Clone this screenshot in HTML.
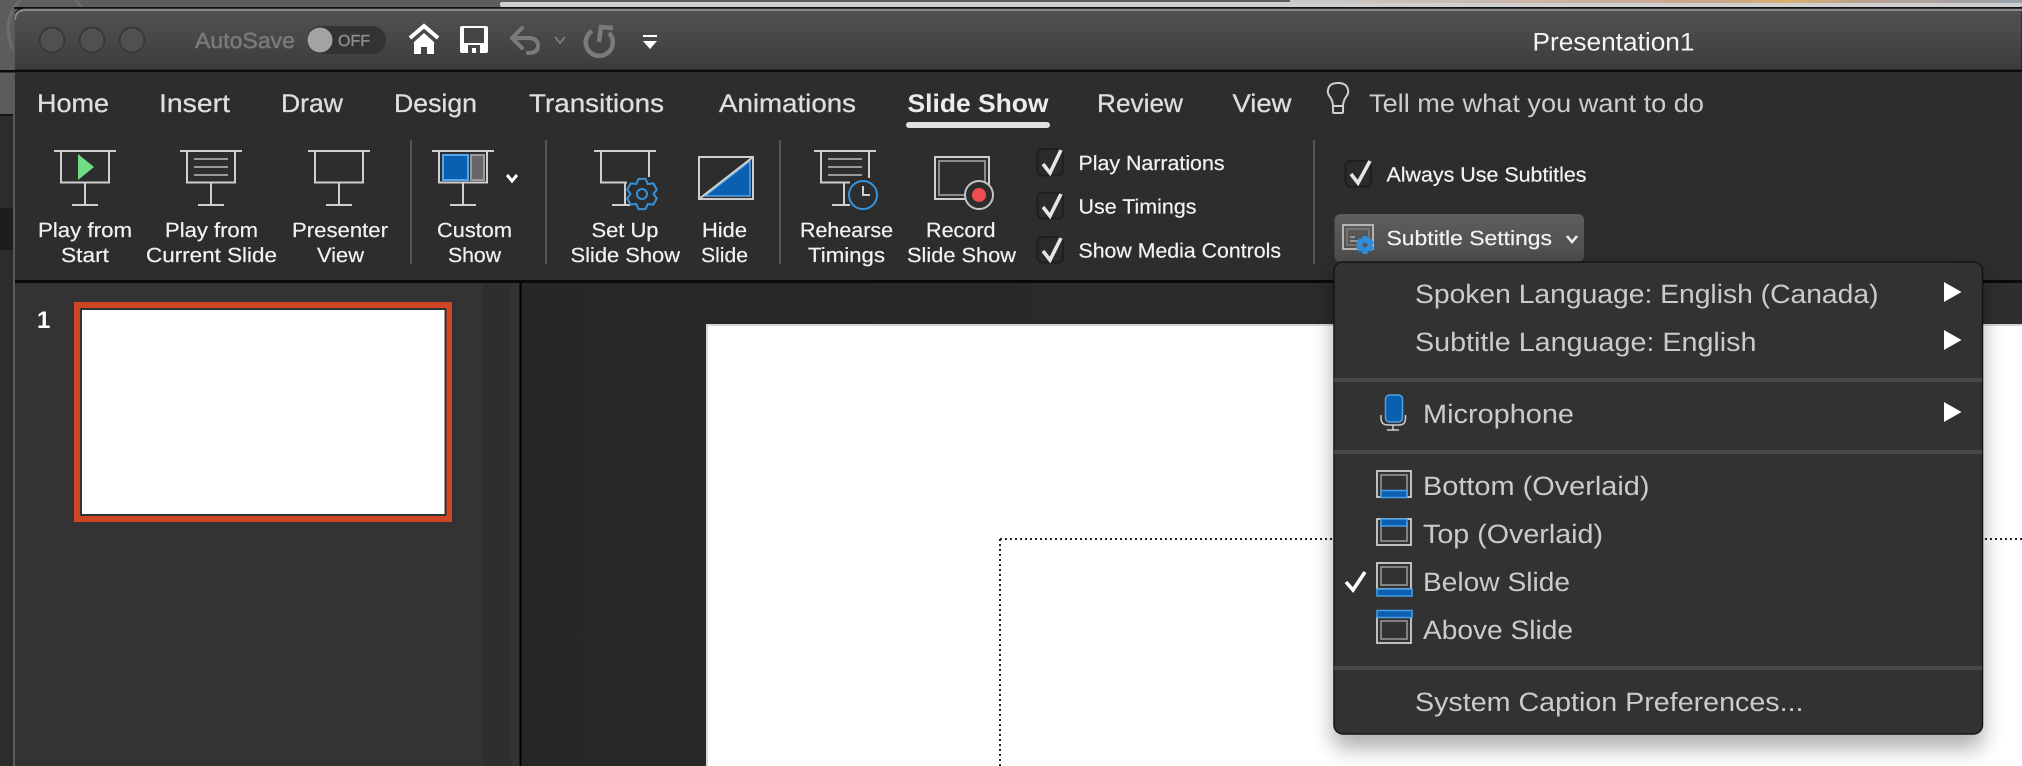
<!DOCTYPE html>
<html lang="en">
<head>
<meta charset="utf-8">
<title>Presentation1</title>
<style>
html,body{margin:0;padding:0;width:2022px;height:766px;overflow:hidden;background:#2a2c2c}
svg{display:block;font-family:"Liberation Sans",sans-serif;text-rendering:geometricPrecision}
.tab{font-size:25.5px;fill:#dedede;stroke:#dedede;stroke-width:.3}
.rb{font-size:20.5px;fill:#f2f2f2;stroke:#f2f2f2;stroke-width:.2}
.mn{font-size:26.5px;fill:#cbcbcb}
.ic{fill:none;stroke:#cfcfcf;stroke-width:2}
.ln{stroke:#999;stroke-width:2}
.cb{fill:#2b2b2b;stroke:#1f1f1f;stroke-width:2}
.ck{fill:none;stroke:#e6e6e6;stroke-width:3.6}
.sep{fill:#565656}
.ms{fill:#474747}
.bar{fill:#0a5fb0;stroke:#4a9fe3;stroke-width:1.5}
.ol{fill:none;stroke:#cfcfcf;stroke-width:1.8}
.il{fill:none;stroke:#8a8a8a;stroke-width:1.8}
</style>
</head>
<body>
<svg width="2022" height="766" viewBox="0 0 2022 766" xmlns="http://www.w3.org/2000/svg">
<defs>
<linearGradient id="tb" x1="0" y1="0" x2="0" y2="1"><stop offset="0" stop-color="#525252"/><stop offset="1" stop-color="#3c3c3c"/></linearGradient>
<linearGradient id="sb" x1="0" y1="0" x2="0" y2="1"><stop offset="0" stop-color="#5e5e5e"/><stop offset="1" stop-color="#4c4c4c"/></linearGradient>
<linearGradient id="wp" x1="0" y1="0" x2="1" y2="0"><stop offset="0" stop-color="#c9c9c9"/><stop offset=".58" stop-color="#c9a58c"/><stop offset=".68" stop-color="#d8b070"/><stop offset=".78" stop-color="#b8a090"/><stop offset="1" stop-color="#9aa4ac"/></linearGradient>
<linearGradient id="mainbg" x1="0" y1="0" x2="1" y2="0"><stop offset="0" stop-color="#272727"/><stop offset="1" stop-color="#2e2e2e"/></linearGradient>
<filter id="shadow" x="-10%" y="-10%" width="120%" height="125%"><feGaussianBlur stdDeviation="11"/></filter>
<polygon id="gear" points="-3.5,-15.1 3.5,-15.1 5.75,-9.96 11.3,-10.6 14.8,-4.5 11.5,0 14.8,4.5 11.3,10.6 5.75,9.96 3.5,15.1 -3.5,15.1 -5.75,9.96 -11.3,10.6 -14.8,4.5 -11.5,0 -14.8,-4.5 -11.3,-10.6 -5.75,-9.96" stroke-linejoin="round"/>
</defs>

<!-- behind the window -->
<rect x="0" y="0" width="2022" height="9" fill="#5c5c5c"/>
<rect x="0" y="0" width="14" height="114" fill="#5c5c5c"/>
<circle cx="48" cy="29" r="40" fill="#5e5e5e" stroke="#6c6c6c" stroke-width="3"/>
<rect x="0" y="114" width="14" height="2" fill="#161616"/>
<rect x="0" y="116" width="14" height="650" fill="#2b2d2d"/>
<rect x="0" y="208" width="14" height="42" fill="#1d1d1d"/>
<rect x="500" y="2" width="1522" height="5" rx="2" fill="#cfcfcf"/>
<rect x="1290" y="0" width="732" height="3" fill="url(#wp)"/>
<rect x="14" y="7" width="2008" height="2" fill="#111"/>

<!-- title bar -->
<path d="M14 70V20Q14 8 26 8H2022V70Z" fill="url(#tb)" stroke="#111" stroke-width="1"/>
<path d="M15 20Q15 10 26 10H2022" fill="none" stroke="#8a8a8a" stroke-width="2"/>
<rect x="13" y="9" width="2" height="757" fill="#5a5a5a"/>
<circle cx="52" cy="40" r="12.5" fill="#515151" stroke="#383838" stroke-width="2"/>
<circle cx="92" cy="40" r="12.5" fill="#515151" stroke="#383838" stroke-width="2"/>
<circle cx="132" cy="40" r="12.5" fill="#515151" stroke="#383838" stroke-width="2"/>
<text x="195" y="48" font-size="22" fill="#7a7a7a" stroke="#7a7a7a" stroke-width=".5" textLength="100" lengthAdjust="spacingAndGlyphs">AutoSave</text>
<rect x="307" y="26" width="79" height="28" rx="14" fill="#333"/>
<circle cx="320" cy="40" r="12.5" fill="#a3a3a3"/>
<text x="338" y="46" font-size="16" fill="#8e8e8e" stroke="#8e8e8e" stroke-width=".4" textLength="32" lengthAdjust="spacingAndGlyphs">OFF</text>

<!-- home -->
<path d="M410 38L424 26L438 38" fill="none" stroke="#fff" stroke-width="4"/>
<path d="M414 42L424 33L434 42V54H427V47H421V54H414Z" fill="#fff"/>
<!-- save -->
<path d="M462 26H486Q488 26 488 28V51Q488 53 486 53H462Q460 53 460 51V28Q460 26 462 26Z" fill="#fff"/>
<rect x="464" y="28" width="20" height="15" fill="#454545"/>
<rect x="468" y="45" width="12" height="8" fill="#454545"/>
<rect x="472" y="48" width="4" height="5" fill="#fff"/>
<!-- undo -->
<path d="M522 28L512 38L522 48M513 38H528Q538 38 538 46Q538 53 528 53" fill="none" stroke="#7b7b7b" stroke-width="4" stroke-linecap="round" stroke-linejoin="round"/>
<path d="M555 37L560 43L565 37" fill="none" stroke="#7b7b7b" stroke-width="2"/>
<!-- redo -->
<path d="M592 31A13.5 13.5 0 1 0 609 33" fill="none" stroke="#7b7b7b" stroke-width="4.5"/>
<path d="M613 28L601 27L599 42" fill="none" stroke="#7b7b7b" stroke-width="4.5"/>
<!-- customize -->
<rect x="643" y="35" width="14" height="2" fill="#fff"/>
<polygon points="643,41 657,41 650,49" fill="#fff"/>

<text x="1532.5" y="50.5" font-size="25.5" fill="#f4f4f4" textLength="162" lengthAdjust="spacingAndGlyphs">Presentation1</text>

<!-- ribbon -->
<rect x="0" y="70" width="2022" height="2.5" fill="#0c0c0c"/>
<rect x="15" y="72" width="2007" height="208" fill="#2d2d2d"/>
<rect x="15" y="280" width="2007" height="3" fill="#0a0a0a"/>

<text class="tab" x="37" y="112" textLength="72" lengthAdjust="spacingAndGlyphs">Home</text>
<text class="tab" x="159" y="112" textLength="71" lengthAdjust="spacingAndGlyphs">Insert</text>
<text class="tab" x="281" y="112" textLength="62" lengthAdjust="spacingAndGlyphs">Draw</text>
<text class="tab" x="394" y="112" textLength="83" lengthAdjust="spacingAndGlyphs">Design</text>
<text class="tab" x="529" y="112" textLength="135" lengthAdjust="spacingAndGlyphs">Transitions</text>
<text class="tab" x="719" y="112" textLength="137" lengthAdjust="spacingAndGlyphs">Animations</text>
<text class="tab" x="907.5" y="112" textLength="141" lengthAdjust="spacingAndGlyphs" font-weight="bold" style="fill:#ececec;stroke:none">Slide Show</text>
<rect x="906" y="122" width="144" height="6" rx="3" fill="#e2e2e2"/>
<text class="tab" x="1097" y="112" textLength="86" lengthAdjust="spacingAndGlyphs">Review</text>
<text class="tab" x="1232.5" y="112" textLength="59" lengthAdjust="spacingAndGlyphs">View</text>
<path d="M1333 107Q1333 101 1330 97Q1327 93 1328 90Q1329 83 1338 83Q1347 83 1348 90Q1349 93 1346 97Q1343 101 1343 107V112Q1343 113 1342 113H1334Q1333 113 1333 112Z M1333 106H1343" fill="none" stroke="#cfcfcf" stroke-width="2"/>
<text class="tab" x="1369" y="112" textLength="335" lengthAdjust="spacingAndGlyphs" style="fill:#cdcdcd;stroke:none">Tell me what you want to do</text>

<!-- play from start -->
<g class="ic"><path d="M54 151H116M61 151V182.5H109V151M85 182.5V205M72 205H98"/></g>
<polygon points="78,154 94,167 78,180" fill="#70dc84"/>
<text class="rb" x="38" y="237" textLength="94" lengthAdjust="spacingAndGlyphs">Play from</text>
<text class="rb" x="61" y="262" textLength="48" lengthAdjust="spacingAndGlyphs">Start</text>

<!-- play from current slide -->
<g class="ic"><path d="M180 151H242M187 151V182.5H235V151M211 182.5V205M198 205H224"/></g>
<path class="ln" d="M194 159H228M194 167H228M194 175H228"/>
<text class="rb" x="165" y="237" textLength="93" lengthAdjust="spacingAndGlyphs">Play from</text>
<text class="rb" x="146" y="262" textLength="131" lengthAdjust="spacingAndGlyphs">Current Slide</text>

<!-- presenter view -->
<g class="ic"><path d="M308 151H370M315 151V182.5H363V151M339 182.5V205M326 205H352"/></g>
<text class="rb" x="292" y="237" textLength="96" lengthAdjust="spacingAndGlyphs">Presenter</text>
<text class="rb" x="317" y="262" textLength="47" lengthAdjust="spacingAndGlyphs">View</text>

<rect class="sep" x="410" y="140" width="2" height="124"/>

<!-- custom show -->
<g class="ic"><path d="M432 151H494M439 151V182.5H487V151M463 182.5V205M450 205H476"/></g>
<rect x="443" y="155" width="25" height="25" fill="#0a5fb0" stroke="#56a7e8" stroke-width="2"/>
<rect x="471" y="155" width="13" height="25" fill="#666" stroke="#9a9a9a" stroke-width="2"/>
<path d="M507 175L512 181L517 175" fill="none" stroke="#fff" stroke-width="3"/>
<text class="rb" x="437" y="237" textLength="75" lengthAdjust="spacingAndGlyphs">Custom</text>
<text class="rb" x="448" y="262" textLength="53" lengthAdjust="spacingAndGlyphs">Show</text>

<rect class="sep" x="545" y="140" width="2" height="124"/>

<!-- set up slide show -->
<g class="ic"><path d="M594 151H656M601 151V182.5H627M649 151V177M625 182.5V205M612 205H630"/></g>
<use href="#gear" transform="translate(642 194)" fill="#2d2d2d" stroke="#3593dc" stroke-width="2"/>
<circle cx="642" cy="194" r="5" fill="none" stroke="#3593dc" stroke-width="2"/>
<text class="rb" x="591.5" y="237" textLength="67" lengthAdjust="spacingAndGlyphs">Set Up</text>
<text class="rb" x="570.5" y="262" textLength="109.5" lengthAdjust="spacingAndGlyphs">Slide Show</text>

<!-- hide slide -->
<rect x="699" y="157" width="54" height="42" fill="none" stroke="#cfcfcf" stroke-width="2"/>
<polygon points="750,161 750,196 705,196" fill="#0a5fb0" stroke="#56a7e8" stroke-width="1.5"/>
<path d="M699 199L753 157" stroke="#cfcfcf" stroke-width="2"/>
<text class="rb" x="702" y="237" textLength="45" lengthAdjust="spacingAndGlyphs">Hide</text>
<text class="rb" x="701" y="262" textLength="47" lengthAdjust="spacingAndGlyphs">Slide</text>

<rect class="sep" x="779" y="140" width="2" height="124"/>

<!-- rehearse -->
<g class="ic"><path d="M814 151H876M821 151V182.5H850M869 151V178M844 182.5V205M832 205H850"/></g>
<path class="ln" d="M828 159H862M828 167H862M828 175H862"/>
<circle cx="863" cy="195" r="14" fill="#2d2d2d" stroke="#3593dc" stroke-width="2"/>
<path d="M863 186V195H870" fill="none" stroke="#cfcfcf" stroke-width="2"/>
<text class="rb" x="800" y="237" textLength="93" lengthAdjust="spacingAndGlyphs">Rehearse</text>
<text class="rb" x="808" y="262" textLength="77" lengthAdjust="spacingAndGlyphs">Timings</text>

<!-- record -->
<rect x="935" y="157" width="54" height="42" fill="none" stroke="#cfcfcf" stroke-width="2"/>
<rect x="939" y="161" width="46" height="34" fill="none" stroke="#8c8c8c" stroke-width="2"/>
<circle cx="979" cy="195" r="14" fill="#2d2d2d" stroke="#c4c4c4" stroke-width="2"/>
<circle cx="979" cy="195" r="7" fill="#ee4d50"/>
<text class="rb" x="926" y="237" textLength="69.5" lengthAdjust="spacingAndGlyphs">Record</text>
<text class="rb" x="907" y="262" textLength="109" lengthAdjust="spacingAndGlyphs">Slide Show</text>

<!-- checks -->
<rect class="cb" x="1037.5" y="149" width="25.5" height="26.5" rx="5"/>
<path class="ck" d="M1043 164L1050 173L1061 150"/>
<text class="rb" x="1078.5" y="170" textLength="146" lengthAdjust="spacingAndGlyphs">Play Narrations</text>
<rect class="cb" x="1037.5" y="193" width="25.5" height="25.5" rx="5"/>
<path class="ck" d="M1043 207L1050 216L1061 194"/>
<text class="rb" x="1078.5" y="213.5" textLength="118" lengthAdjust="spacingAndGlyphs">Use Timings</text>
<rect class="cb" x="1037.5" y="237" width="25.5" height="25.5" rx="5"/>
<path class="ck" d="M1043 251L1050 260L1061 238"/>
<text class="rb" x="1078.5" y="257.5" textLength="202.5" lengthAdjust="spacingAndGlyphs">Show Media Controls</text>

<rect class="sep" x="1313" y="140" width="2" height="124"/>

<rect class="cb" x="1345.5" y="161" width="25.5" height="25.5" rx="5"/>
<path class="ck" d="M1351 174L1358 183L1370 161"/>
<text class="rb" x="1386.5" y="181.5" textLength="200" lengthAdjust="spacingAndGlyphs">Always Use Subtitles</text>

<!-- subtitle settings -->
<rect x="1334.5" y="214" width="249.5" height="48" rx="6" fill="url(#sb)"/>
<rect x="1343" y="225" width="30" height="24" fill="none" stroke="#b4b4b4" stroke-width="2"/>
<rect x="1347" y="229" width="22" height="16" fill="none" stroke="#7e7e7e" stroke-width="1.5"/>
<path d="M1350 237H1355M1350 241H1358" stroke="#aaa" stroke-width="1.5"/>
<use href="#gear" transform="translate(1365 245) scale(.55)" fill="#2d8ede" stroke="#2d8ede" stroke-width="2"/>
<circle cx="1365" cy="245" r="2.5" fill="#555"/>
<text class="rb" x="1386.5" y="245" textLength="165.5" lengthAdjust="spacingAndGlyphs">Subtitle Settings</text>
<path d="M1567 236L1572 242L1577 236" fill="none" stroke="#f0f0f0" stroke-width="2.5"/>

<!-- thumbnail pane -->
<rect x="15" y="283" width="468" height="483" fill="#333"/>
<rect x="483" y="283" width="28" height="483" fill="#2e2e2e"/>
<rect x="511" y="283" width="9" height="483" fill="#333"/>
<rect x="519.5" y="283" width="2" height="483" fill="#000"/>
<text x="37" y="328" font-size="24" font-weight="bold" fill="#fff">1</text>
<rect x="74" y="302" width="378" height="220" fill="#d04525"/>
<rect x="80" y="308" width="366.5" height="208" fill="#333"/>
<rect x="82" y="310" width="362.5" height="204" fill="#fff"/>

<!-- main canvas -->
<rect x="521.5" y="283" width="1501" height="483" fill="url(#mainbg)"/>
<rect x="706" y="324" width="1316" height="442" fill="#fff"/>
<rect x="706" y="324" width="1316" height="2" fill="#d6d6d6"/>
<rect x="706" y="324" width="2" height="442" fill="#d6d6d6"/>
<path d="M1000 539H2022M1000 539V766" fill="none" stroke="#222" stroke-width="2" stroke-dasharray="2 3"/>

<!-- dropdown -->
<rect x="1333" y="270" width="650" height="478" rx="10" fill="#000" opacity=".32" filter="url(#shadow)"/>
<rect x="1334" y="262" width="648.5" height="472" rx="9" fill="#323232" stroke="#151515" stroke-width="1.5"/>
<text class="mn" x="1415" y="303" textLength="463.5" lengthAdjust="spacingAndGlyphs">Spoken Language: English (Canada)</text>
<text class="mn" x="1415" y="351" textLength="341.5" lengthAdjust="spacingAndGlyphs">Subtitle Language: English</text>
<polygon points="1944,282 1961.5,292 1944,302" fill="#fff"/>
<polygon points="1944,330 1961.5,340 1944,350" fill="#fff"/>
<rect class="ms" x="1334" y="378" width="648" height="4"/>
<rect x="1385.5" y="395" width="17" height="27" rx="4" fill="#0a5fb0" stroke="#4ea3e6" stroke-width="1.5"/>
<path d="M1381 415V418Q1381 425 1388 425H1399Q1405.5 425 1405.5 418V415M1393 425V430M1387 430H1399" fill="none" stroke="#cfcfcf" stroke-width="1.5"/>
<text class="mn" x="1423" y="423" textLength="151" lengthAdjust="spacingAndGlyphs">Microphone</text>
<polygon points="1944,402 1961.5,412 1944,422" fill="#fff"/>
<rect class="ms" x="1334" y="450" width="648" height="4"/>

<!-- bottom overlaid -->
<rect class="ol" x="1377" y="471" width="34" height="26"/>
<rect class="il" x="1381" y="475" width="26" height="20"/>
<rect class="bar" x="1381" y="490.5" width="26" height="7"/>
<text class="mn" x="1423" y="495" textLength="226.5" lengthAdjust="spacingAndGlyphs">Bottom (Overlaid)</text>
<!-- top overlaid -->
<rect class="ol" x="1377" y="519" width="34" height="26"/>
<rect class="il" x="1381" y="523" width="26" height="18"/>
<rect class="bar" x="1381" y="519" width="26" height="7"/>
<text class="mn" x="1423" y="543" textLength="180" lengthAdjust="spacingAndGlyphs">Top (Overlaid)</text>
<!-- below slide -->
<rect class="ol" x="1377" y="563" width="34" height="26"/>
<rect class="il" x="1381" y="567" width="26" height="18"/>
<rect class="bar" x="1377" y="589" width="35" height="7"/>
<path d="M1346 582L1353 590L1365 572" fill="none" stroke="#fff" stroke-width="3.6"/>
<text class="mn" x="1423" y="591" textLength="147" lengthAdjust="spacingAndGlyphs">Below Slide</text>
<!-- above slide -->
<rect class="ol" x="1377" y="617" width="34" height="26"/>
<rect class="il" x="1381" y="621" width="26" height="18"/>
<rect class="bar" x="1377" y="610.5" width="35" height="7"/>
<text class="mn" x="1423" y="639" textLength="150" lengthAdjust="spacingAndGlyphs">Above Slide</text>
<rect class="ms" x="1334" y="666" width="648" height="4"/>
<text class="mn" x="1415" y="711" textLength="388.5" lengthAdjust="spacingAndGlyphs">System Caption Preferences...</text>
</svg>
</body>
</html>
